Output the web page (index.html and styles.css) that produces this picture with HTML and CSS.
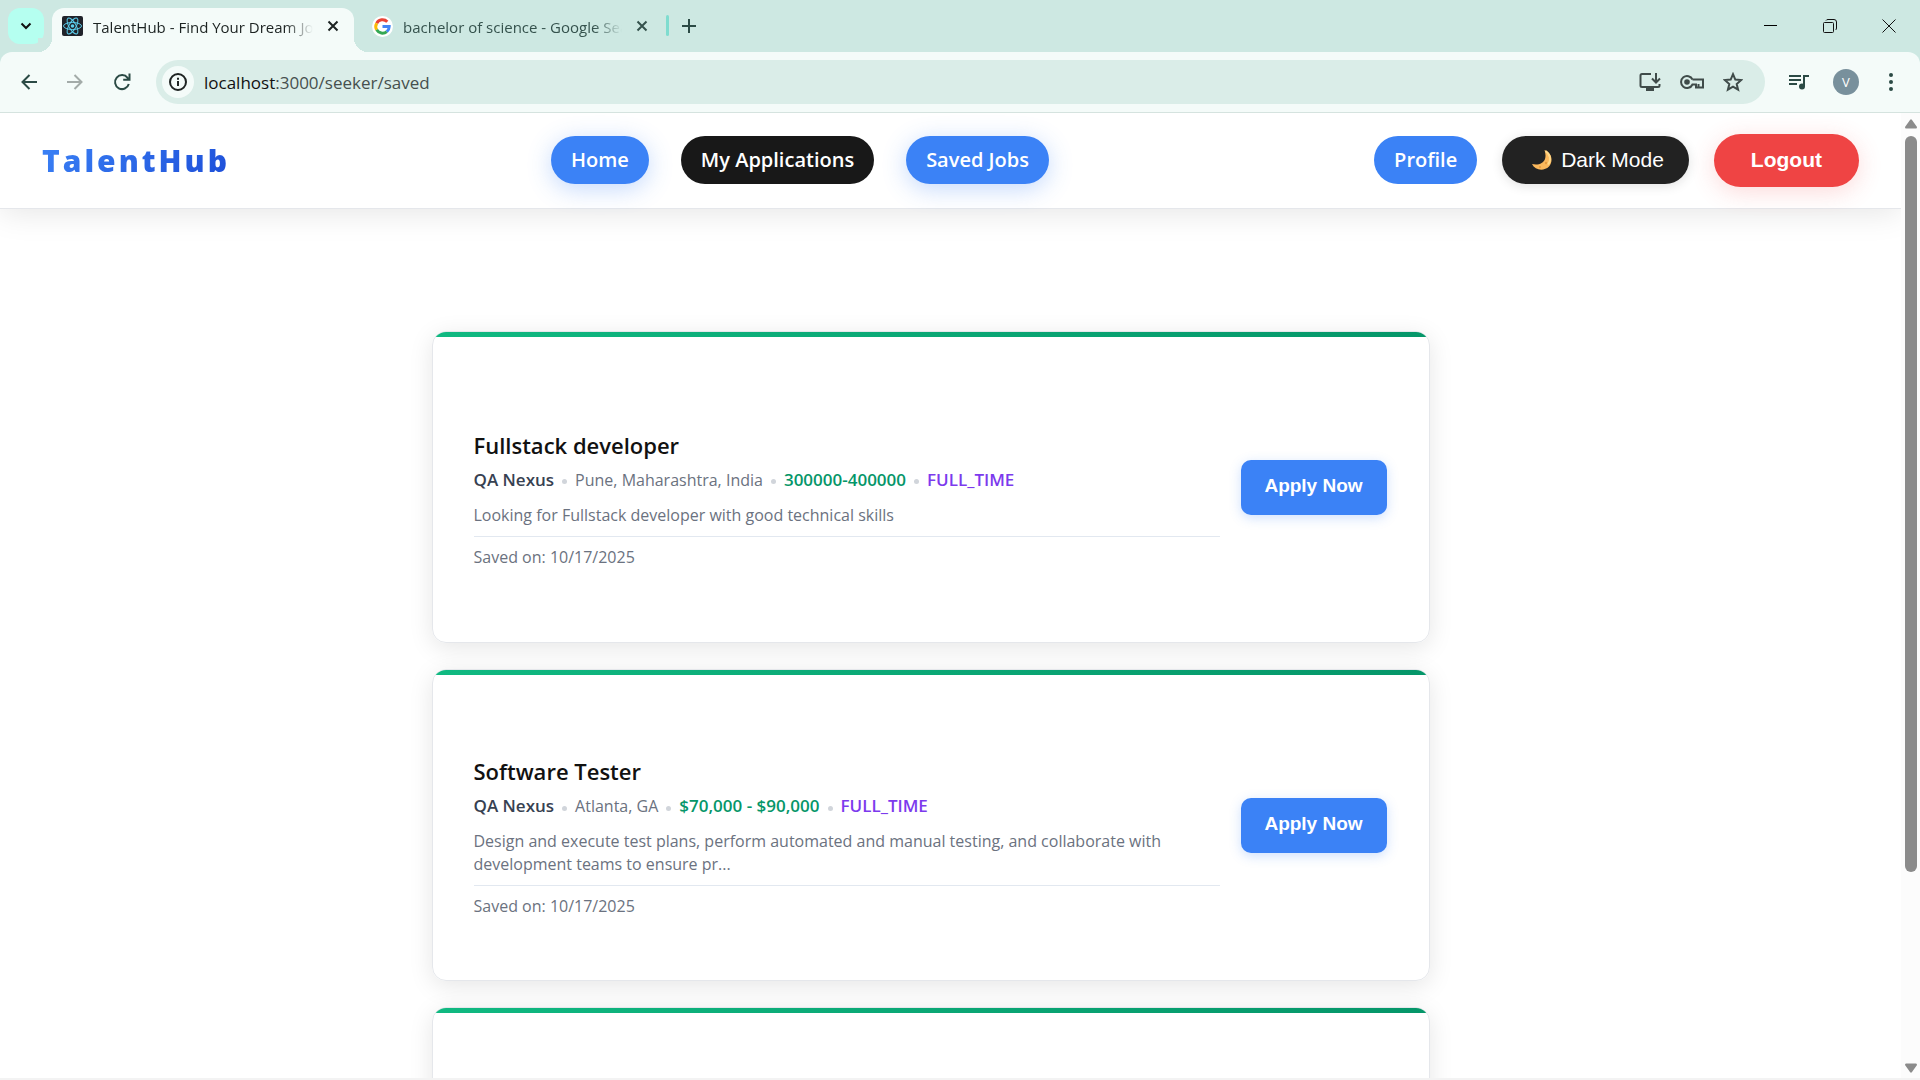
FILE: index.html
```html
<!DOCTYPE html>
<html lang="en">
<head>
<meta charset="utf-8">
<title>TalentHub - Find Your Dream Job</title>
<link rel="stylesheet" href="styles.css">
</head>
<body>
<header class="browser">
  <div class="tab-strip">
    <button class="tab-search" aria-label="Search tabs"><svg width="12" height="8" viewBox="0 0 12 8"><path d="M1.5 1.5 6 6l4.500-4.500" fill="none" stroke="#111" stroke-width="2"/></svg></button>
    <div class="tab tab-active">
      <svg class="favicon" width="21" height="20" viewBox="0 0 21 20"><rect width="21" height="20" rx="2" fill="#20232a"/><g fill="none" stroke="#5ccfee" stroke-width="1"><ellipse cx="10.500" cy="10" rx="9" ry="3.500"/><ellipse cx="10.500" cy="10" rx="9" ry="3.500" transform="rotate(60 10.500 10)"/><ellipse cx="10.500" cy="10" rx="9" ry="3.500" transform="rotate(120 10.500 10)"/></g><circle cx="10.500" cy="10" r="1.800" fill="#5ccfee"/></svg>
      <span class="tab-title">TalentHub - Find Your Dream Job</span>
      <button class="tab-close" aria-label="Close tab"><svg width="12" height="12" viewBox="0 0 12 12"><path d="M1.500 1.500l9 9M10.500 1.500l-9 9" stroke="currentColor" stroke-width="2"/></svg></button>
    </div>
    <div class="tab">
      <svg class="favicon" width="21" height="21" viewBox="0 0 21 21"><circle cx="10.500" cy="10.500" r="10.500" fill="#fff"/><g fill="none" stroke-width="3"><path d="M15.300 5.800A6.700 6.700 0 0 0 4.700 7.200" stroke="#ea4335"/><path d="M4.700 7.200a6.700 6.700 0 0 0 0 6.600" stroke="#fbbc05"/><path d="M4.700 13.800a6.700 6.700 0 0 0 10.100 1.800" stroke="#34a853"/><path d="M14.800 15.600a6.700 6.700 0 0 0 2.400-5.100h-6.700" stroke="#4285f4"/></g></svg>
      <span class="tab-title">bachelor of science - Google Search</span>
      <button class="tab-close" aria-label="Close tab"><svg width="12" height="12" viewBox="0 0 12 12"><path d="M1.500 1.500l9 9M10.500 1.500l-9 9" stroke="currentColor" stroke-width="2"/></svg></button>
    </div>
    <span class="tab-divider"></span>
    <button class="new-tab" aria-label="New tab"><svg width="14" height="14" viewBox="0 0 14 14"><path d="M7 0v14M0 7h14" stroke="#2b4a45" stroke-width="2"/></svg></button>
    <div class="window-controls">
      <button aria-label="Minimize"><svg width="14" height="14" viewBox="0 0 14 14"><path d="M0 6.500h13" stroke="#000"/></svg></button>
      <button aria-label="Restore"><svg width="14" height="14" viewBox="0 0 14 14"><g fill="none" stroke="#111"><rect x=".500" y="3.500" width="10" height="10" rx="1"/><path d="M3 1.500Q3.500.500 5 .500h6Q13.500.500 13.500 3v6q0 1.500-1 2"/></g></svg></button>
      <button aria-label="Close"><svg width="14" height="14" viewBox="0 0 14 14"><path d="M.500.500l13 13M13.500.500l-13 13" stroke="#111"/></svg></button>
    </div>
  </div>
  <div class="toolbar">
    <button class="tool" aria-label="Back"><svg width="16" height="16" viewBox="0 0 16 16"><path d="M16 8H2M8.500 1 1.500 8l7 7" fill="none" stroke="#2b4a45" stroke-width="2"/></svg></button>
    <button class="tool" aria-label="Forward"><svg width="16" height="16" viewBox="0 0 16 16"><path d="M0 8h14M7.500 1l7 7-7 7" fill="none" stroke="#a3aba9" stroke-width="2"/></svg></button>
    <button class="tool" aria-label="Reload"><svg width="18" height="18" viewBox="0 0 18 18"><path d="M15.800 11a7 7 0 1 1-1.200-6.200L16 6.500M16.500.500v6.300h-6.300" fill="none" stroke="#2b4a45" stroke-width="2"/></svg></button>
    <div class="address">
      <button class="site-info" aria-label="Site information"><svg width="18" height="18" viewBox="0 0 18 18"><circle cx="9" cy="9" r="8" fill="none" stroke="#1f2423" stroke-width="2"/><path d="M9 8v5M9 4.800v2" stroke="#1f2423" stroke-width="2"/></svg></button>
      <span class="url"><span class="host">localhost</span>:3000/seeker/saved</span>
      <div class="address-actions">
        <button aria-label="Install"><svg width="22" height="20" viewBox="0 0 22 20"><path d="M12 2H3Q1.500 2 1.500 3.500v10Q1.500 15 3 15h16q1.500 0 1.500-1.500V12M17 1v9M13 6.500l4 4 4-4" fill="none" stroke="#3f4b49" stroke-width="2"/><path d="M7 15h8v4H7z" fill="#3f4b49"/></svg></button>
        <button aria-label="Passwords"><svg width="24" height="16" viewBox="0 0 24 16"><path d="M12.500 5.500A6 6 0 1 0 12.500 10.500H16v3h2.500v-3.500M12.500 5.500H23v8h-4.500" fill="none" stroke="#3f4b49" stroke-width="2"/><circle cx="7" cy="8" r="2.800" fill="#3f4b49"/></svg></button>
        <button aria-label="Bookmark"><svg width="20" height="20" viewBox="0 0 20 20"><path d="M10 2.200l2.300 5.400 5.900.500-4.500 3.900 1.400 5.700L10 14.700l-5.100 3L6.300 12 1.800 8.100l5.900-.500z" fill="none" stroke="#3f4b49" stroke-width="2"/></svg></button>
      </div>
    </div>
    <button class="tool media" aria-label="Media controls"><svg width="20" height="16" viewBox="0 0 20 16"><path d="M0 2h12M0 6h12M0 10h8M15 12V2h5" fill="none" stroke="#2b4a45" stroke-width="2"/><circle cx="13" cy="12.500" r="3" fill="#2b4a45"/></svg></button>
    <button class="profile-avatar" aria-label="Profile V">V</button>
    <button class="tool" aria-label="Menu"><svg width="4" height="18" viewBox="0 0 4 18"><g fill="#2b4a45"><circle cx="2" cy="2" r="2"/><circle cx="2" cy="9" r="2"/><circle cx="2" cy="16" r="2"/></g></svg></button>
  </div>
</header>

<div class="viewport">
  <div class="page">
    <nav class="navbar">
      <a class="logo" href="#">TalentHub</a>
      <div class="nav-links">
        <a class="pill pill-blue glow" href="#">Home</a>
        <a class="pill pill-black" href="#">My Applications</a>
        <a class="pill pill-blue glow" href="#">Saved Jobs</a>
      </div>
      <div class="nav-actions">
        <a class="pill pill-blue" href="#">Profile</a>
        <button class="pill theme-toggle"><svg width="22" height="22" viewBox="0 0 22 22"><path d="M13.500 1C21 4 22.500 12 18 17.500 13 22.500 4 21.500 1 15c6 1.500 11.500-.500 13-5 .900-3 .500-6-.500-9z" fill="#fbb85c"/><path d="M14.500 2c5 3.500 6 9 2.500 13.500" fill="none" stroke="#ffd98a" stroke-width="2"/><circle cx="15" cy="14" r="1.200" fill="#e59a3e"/><circle cx="9" cy="18" r="1" fill="#e59a3e"/></svg>Dark Mode</button>
        <button class="pill logout">Logout</button>
      </div>
    </nav>
    <main class="jobs">
      <article class="card">
        <div class="job">
          <h2>Fullstack developer</h2>
          <p class="meta"><span class="company">QA Nexus</span><i class="dot"></i><span class="location">Pune, Maharashtra, India</span><i class="dot"></i><span class="salary">300000-400000</span><i class="dot"></i><span class="type">FULL_TIME</span></p>
          <p class="description">Looking for Fullstack developer with good technical skills</p>
          <p class="saved">Saved on: 10/17/2025</p>
        </div>
        <button class="apply">Apply Now</button>
      </article>
      <article class="card">
        <div class="job">
          <h2>Software Tester</h2>
          <p class="meta"><span class="company">QA Nexus</span><i class="dot"></i><span class="location">Atlanta, GA</span><i class="dot"></i><span class="salary">$70,000 - $90,000</span><i class="dot"></i><span class="type">FULL_TIME</span></p>
          <p class="description">Design and execute test plans, perform automated and manual testing, and collaborate with development teams to ensure pr...</p>
          <p class="saved">Saved on: 10/17/2025</p>
        </div>
        <button class="apply">Apply Now</button>
      </article>
      <article class="card"></article>
    </main>
  </div>
  <div class="scrollbar">
    <svg width="12" height="10" viewBox="0 0 12 10"><path d="M5 1q1-1.500 2 0l5 7q0 1.500-1 1.500H1Q0 9.500 0 8z" fill="#8b8b8b"/></svg>
    <div class="track"><div class="thumb"></div></div>
    <svg width="12" height="10" viewBox="0 0 12 10"><path d="M5 9q1 1.500 2 0l5-7q0-1.500-1-1.500H1Q0 .500 0 2z" fill="#8b8b8b"/></svg>
  </div>
</div>
</body>
</html>
```
FILE: styles.css
```css
* {
  box-sizing: border-box;
}

body {
  margin: 0;
  height: 100vh;
  display: flex;
  flex-direction: column;
  overflow: hidden;
  background: #fff;
  font-family: "Open Sans", "Noto Sans", sans-serif;
}

button {
  border: 0;
  padding: 0;
  background: none;
  font: inherit;
  color: inherit;
}

a {
  text-decoration: none;
}

svg {
  display: block;
  flex: none;
}

h2,
p {
  margin: 0;
}

/* Browser window */
.browser {
  flex: none;
  background: #cde8e2;
  border-bottom: 1px solid #d5e3df;
}

.tab-strip {
  height: 52px;
  padding: 8px 2px 0 8px;
  display: flex;
}

.tab-search {
  width: 36px;
  height: 36px;
  margin-right: 8px;
  border-radius: 12px;
  background: #b5fff0;
  display: grid;
  place-items: center;
}

.tab {
  position: relative;
  width: 302px;
  height: 44px;
  padding: 0 15px 8px 10px;
  display: flex;
  align-items: center;
  font-size: 15px;
  line-height: 20px;
  color: #35524d;
}

.tab + .tab {
  padding-left: 18px;
  padding-right: 8px;
}

.tab-active {
  background: #f4fbf9;
  border-radius: 12px 12px 0 0;
  color: #1c2322;
}

/* Curved feet of the active tab */
.tab-active::before,
.tab-active::after {
  content: "";
  position: absolute;
  bottom: 0;
  width: 14px;
  height: 14px;
}

.tab-active::before {
  right: 100%;
  background: radial-gradient(circle at 0 0, #cde8e2 14px, #f4fbf9 14px);
}

.tab-active::after {
  left: 100%;
  background: radial-gradient(circle at 100% 0, #cde8e2 14px, #f4fbf9 14px);
}

.tab-title {
  flex: 1;
  margin: 0 14px 0 10px;
  padding-top: 2px;
  overflow: hidden;
  white-space: nowrap;
  -webkit-mask-image: linear-gradient(to left, transparent, #000 28px);
  mask-image: linear-gradient(to left, transparent, #000 28px);
}

.tab-divider {
  width: 3px;
  height: 21px;
  margin: 7px 13px 0 10px;
  border-radius: 2px;
  background: #7fdccf;
}

.new-tab {
  height: 36px;
}

.window-controls {
  margin-left: auto;
  height: 36px;
  display: flex;
}

.window-controls button {
  width: 59px;
  display: grid;
  place-items: center;
}

.toolbar {
  height: 60px;
  padding: 0 27px 0 21px;
  display: flex;
  align-items: center;
  gap: 30px;
  background: #f4fbf9;
  border-radius: 12px 12px 0 0;
}

.address {
  flex: 1;
  height: 44px;
  margin: 0 -6px 0 -5px;
  padding: 0 22px 0 6px;
  display: flex;
  align-items: center;
  gap: 10px;
  border-radius: 22px;
  background: #daede8;
}

.site-info {
  width: 32px;
  height: 32px;
  border-radius: 50%;
  background: #f4fbf9;
  display: grid;
  place-items: center;
}

.url {
  font-size: 17px;
  color: #46504e;
}

.host {
  color: #111;
}

.address-actions {
  margin-left: auto;
  display: flex;
  align-items: center;
  gap: 19px;
}

.profile-avatar {
  width: 26px;
  height: 26px;
  margin: 0 0 0 -6px;
  border-radius: 50%;
  background: #78909c;
  color: #fff;
  font-size: 13px;
  line-height: 26px;
}

/* Web page */
.viewport {
  flex: 1;
  min-height: 0;
  display: flex;
  border-bottom: 2px solid #f3f3f3;
}

.page {
  flex: 1;
  overflow: hidden;
}

.scrollbar {
  width: 19px;
  padding: 6px 0 5px;
  display: flex;
  flex-direction: column;
  align-items: center;
  gap: 7px;
  background: #fcfcfc;
}

.track {
  flex: 1;
}

.thumb {
  width: 12px;
  height: 80%;
  border-radius: 6px;
  background: #8b8b8b;
}

.navbar {
  height: 96px;
  padding: 0 42px 1px;
  display: grid;
  grid-template-columns: 509px auto 1fr;
  align-items: center;
  border-bottom: 1px solid #e5e7eb;
  box-shadow: 0 4px 30px rgba(0, 0, 0, 0.1);
}

.logo {
  justify-self: start;
  font-size: 30px;
  font-weight: 800;
  letter-spacing: 3px;
  color: transparent;
  background: linear-gradient(135deg, #3b82f6, #1d4ed8);
  -webkit-background-clip: text;
  background-clip: text;
}

.nav-links {
  display: flex;
  gap: 32px;
}

.nav-actions {
  justify-self: end;
  display: flex;
  align-items: center;
  gap: 25px;
}

.pill {
  height: 48px;
  padding: 0 20px;
  display: flex;
  align-items: center;
  justify-content: center;
  border-radius: 24px;
  font-size: 20px;
  font-weight: 600;
  line-height: 28px;
  color: #fff;
}

.pill-blue {
  background: #3b82f6;
}

.pill-black {
  background: #181818;
}

.glow {
  box-shadow: 0 5px 24px rgba(59, 130, 246, 0.3);
}

.theme-toggle {
  padding: 0 25px 0 29px;
  gap: 8px;
  background: #222;
  font-family: "Liberation Sans", Arial, sans-serif;
  font-size: 21px;
  font-weight: 400;
  box-shadow: 0 2px 12px rgba(0, 0, 0, 0.12);
}

.logout {
  height: 53px;
  padding: 0 37px;
  border-radius: 27px;
  background: #ef4444;
  font-family: "Liberation Sans", Arial, sans-serif;
  font-size: 21px;
  font-weight: 700;
  box-shadow: 0 5px 24px rgba(239, 68, 68, 0.2);
}

.jobs {
  max-width: 1080px;
  margin: 0 auto;
  padding: 122px 61px 0 21px;
  display: grid;
  gap: 26px;
}

.card {
  position: relative;
  min-height: 312px;
  padding: 24px 42px 0 41px;
  display: flex;
  align-items: center;
  gap: 21px;
  overflow: hidden;
  border: 1px solid #e5e7eb;
  border-radius: 14px;
  box-shadow: 0 5px 24px rgba(0, 0, 0, 0.1);
}

.card::before {
  content: "";
  position: absolute;
  inset: 0 0 auto;
  height: 5px;
  background: linear-gradient(90deg, #10b981, #059669);
}

.job {
  flex: 1;
}

.job h2 {
  font-size: 22px;
  font-weight: 600;
  line-height: 30px;
  color: #111;
}

.meta {
  margin-top: 7px;
  display: flex;
  align-items: center;
  gap: 8px;
  font-size: 17px;
  line-height: 26px;
  color: #6b7280;
}

.location {
  font-size: 16px;
}

.dot {
  width: 5px;
  height: 5px;
  margin-top: 4px;
  border-radius: 50%;
  background: #d1d5db;
}

.company {
  font-weight: 600;
  color: #374151;
}

.salary {
  font-weight: 600;
  color: #059669;
}

.type {
  font-weight: 600;
  color: #7c3aed;
}

.description {
  margin-top: 11px;
  font-size: 16px;
  line-height: 23px;
  color: #6b7280;
}

.saved {
  margin-top: 9px;
  padding-top: 9px;
  border-top: 1px solid #e2e8f0;
  font-size: 16px;
  line-height: 23px;
  color: #6b7280;
}

.apply {
  width: 146px;
  height: 55px;
  margin-bottom: 24px;
  padding-bottom: 2px;
  border-radius: 10px;
  background: #3b82f6;
  color: #fff;
  font-family: "Liberation Sans", Arial, sans-serif;
  font-size: 19px;
  font-weight: 700;
  box-shadow: 0 3px 12px rgba(59, 130, 246, 0.25);
}
```
